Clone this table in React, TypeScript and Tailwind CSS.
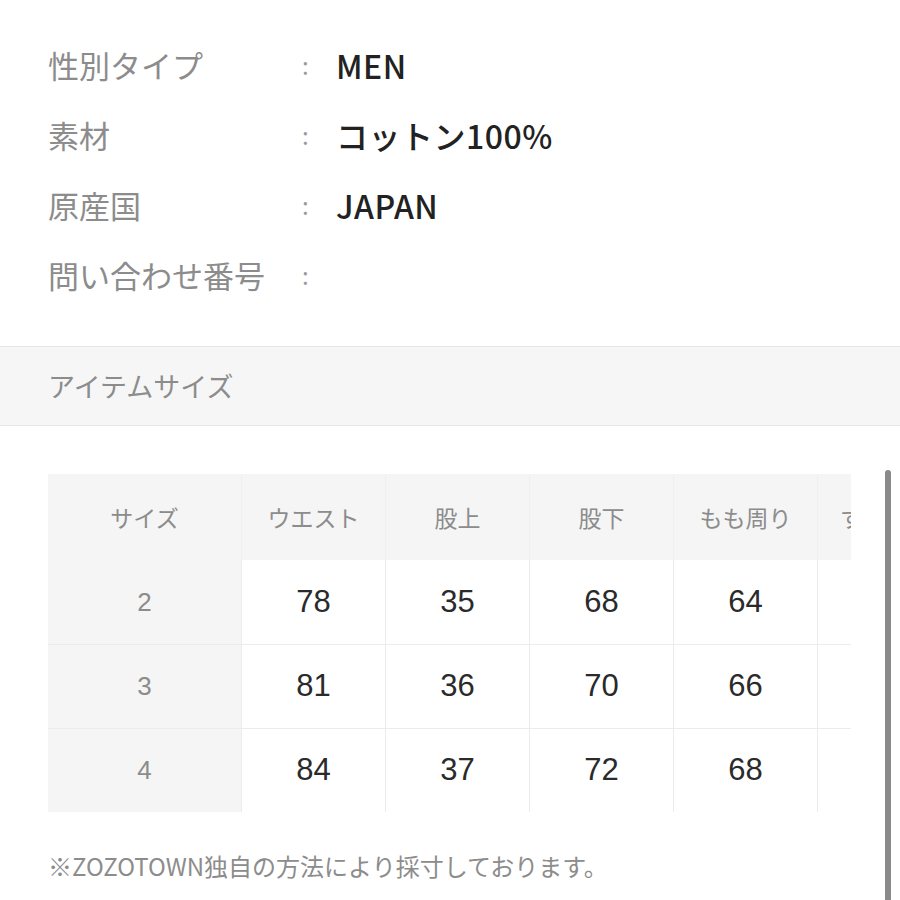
import React from "react";

const specs = [
  { label: "性別タイプ", value: "MEN" },
  { label: "素材", value: "コットン100%" },
  { label: "原産国", value: "JAPAN" },
  { label: "問い合わせ番号", value: "" },
];

const headers = ["ウエスト", "股上", "股下", "もも周り"];

const rows = [
  { size: "2", values: ["78", "35", "68", "64"] },
  { size: "3", values: ["81", "36", "70", "66"] },
  { size: "4", values: ["84", "37", "72", "68"] },
];

const jp = "font-['Noto_Sans_CJK_JP',sans-serif]";
const num = "font-['Liberation_Sans','Noto_Sans_CJK_JP',sans-serif]";

export default function App() {
  return (
    <div className={`relative w-[900px] h-[900px] overflow-hidden bg-white ${jp}`}>
      {/* spec list */}
      <div className="flex flex-col pt-[30px] pl-[48px]">
        {specs.map((s) => (
          <div key={s.label} className="flex items-center h-[70px]">
            <div className="w-[250px] text-[31px] text-[#8c8c8c]">{s.label}</div>
            <div className="w-[38px] text-[24px] text-[#9a9a9a] pl-[4px]">:</div>
            <div className="text-[32px] font-medium text-[#222] tracking-[0.5px]">{s.value}</div>
          </div>
        ))}
      </div>

      {/* section header */}
      <div className="mt-[36px] h-[80px] flex items-center pl-[48px] bg-[#f6f6f6] border-y border-[#e6e6e6] text-[27px] text-[#8c8c8c]">
        アイテムサイズ
      </div>

      {/* size table */}
      <div className="mt-[48px] ml-[48px] w-[803px] overflow-hidden bg-[#f5f5f5]">
        <div className="flex w-[900px]">
          <div className="flex flex-col w-[193px] shrink-0">
            <div className="h-[86px] flex items-center justify-center text-[23px] text-[#8c8c8c]">サイズ</div>
            {rows.map((r, i) => (
              <div
                key={r.size}
                className={`h-[84px] flex items-center justify-center text-[26px] text-[#8c8c8c] ${num} ${i > 0 ? "border-t border-[#ececec]" : ""}`}
              >
                {r.size}
              </div>
            ))}
          </div>
          {headers.map((h, c) => (
            <div key={h} className="flex flex-col w-[144px] shrink-0">
              <div className="h-[86px] flex items-center justify-center text-[23px] text-[#8c8c8c] border-l border-[#efefef]">
                {h}
              </div>
              {rows.map((r, i) => (
                <div
                  key={r.size}
                  className={`h-[84px] flex items-center justify-center bg-white text-[31px] text-[#2a2a2a] ${num} border-l border-[#ececec] ${i > 0 ? "border-t" : ""}`}
                >
                  {r.values[c]}
                </div>
              ))}
            </div>
          ))}
          <div className="flex flex-col w-[144px] shrink-0">
            <div className="h-[86px] flex items-center pl-[22px] text-[23px] text-[#8c8c8c] border-l border-[#efefef]">
              すそ幅
            </div>
            {rows.map((r, i) => (
              <div
                key={r.size}
                className={`h-[84px] bg-white border-l border-[#ececec] ${i > 0 ? "border-t" : ""}`}
              />
            ))}
          </div>
        </div>
      </div>

      {/* note */}
      <div className="mt-[36px] pl-[48px] text-[24px] text-[#8c8c8c]">
        ※ZOZOTOWN独自の方法により採寸しております。
      </div>

      {/* scrollbar */}
      <div className="absolute right-[9px] top-[470px] w-[6px] h-[440px] rounded-full bg-[#8a8a8a]" />
    </div>
  );
}
